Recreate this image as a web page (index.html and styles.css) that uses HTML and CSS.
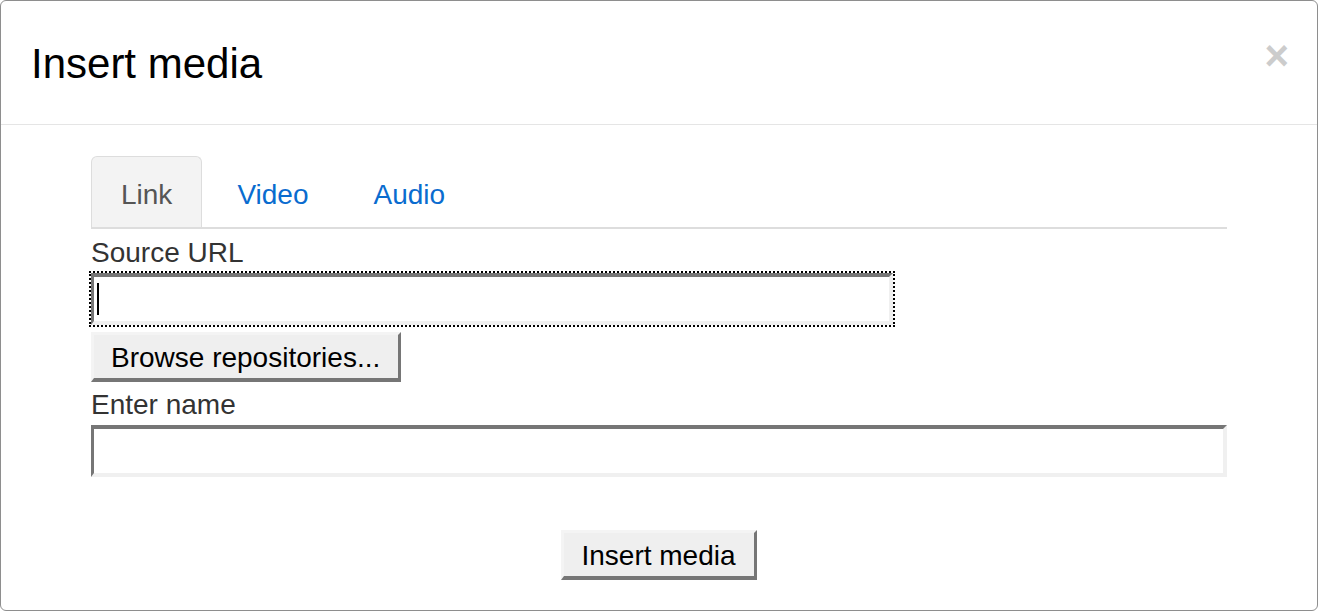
FILE: index.html
```html
<!DOCTYPE html>
<html lang="en">
<head>
<meta charset="utf-8">
<title>Insert media</title>
<link rel="stylesheet" href="styles.css">
</head>
<body>
<div class="modal">
  <header class="modal-header">
    <h3 class="modal-title">Insert media</h3>
    <span class="close" aria-label="Close">×</span>
  </header>
  <div class="modal-body">
    <ul class="tabs">
      <li class="tab active">Link</li>
      <li class="tab">Video</li>
      <li class="tab">Audio</li>
    </ul>
    <label class="field-label">Source URL</label>
    <div class="url-wrap">
      <input class="text-input url-input" type="text">
      <span class="caret"></span>
    </div>
    <button class="btn browse-btn" type="button">Browse repositories...</button>
    <label class="field-label name-label">Enter name</label>
    <input class="text-input name-input" type="text">
    <div class="modal-footer">
      <button class="btn" type="button">Insert media</button>
    </div>
  </div>
</div>
</body>
</html>
```

FILE: styles.css
```css
* { box-sizing: border-box; }

html, body {
  margin: 0;
  padding: 0;
  background: #ffffff;
}

body {
  font-family: "Liberation Sans", Arial, Helvetica, sans-serif;
  font-size: 28px;
  line-height: 40px;
  color: #333333;
}

.modal {
  height: 611px;
  width: 1318px;
  border: 1px solid #8e8e8e;
  border-radius: 6px;
  display: flex;
  flex-direction: column;
  background: #ffffff;
}

.modal-header {
  display: flex;
  justify-content: space-between;
  align-items: flex-start;
  padding: 40px 28px 37px 30px;
  border-bottom: 1px solid #e5e5e5;
}

.modal-title {
  margin: 0;
  font-size: 42px;
  line-height: 46px;
  font-weight: normal;
  color: #000000;
}

.close {
  font-size: 42px;
  line-height: 42px;
  font-weight: bold;
  color: #cccccc;
  margin-top: -6px;
}

.modal-body {
  padding: 31px 90px 0;
}

.tabs {
  list-style: none;
  margin: 0;
  padding: 0;
  display: flex;
  border-bottom: 2px solid #dddddd;
}

.tab {
  padding: 18px 29px 12px;
  margin-right: 5px;
  border: 1px solid transparent;
  border-bottom: 0;
  border-radius: 6px 6px 0 0;
  color: #0a6ccf;
}

.tab.active {
  background: #f3f3f3;
  border-color: #dddddd;
  color: #555555;
}

.field-label {
  display: block;
  margin-top: 4px;
  color: #333333;
}

.name-label {
  margin-top: 3px;
}

.url-wrap {
  position: relative;
  width: 802px;
}

.text-input {
  display: block;
  height: 52px;
  margin: 0;
  padding: 0 8px;
  font: inherit;
  background: #ffffff;
  border-style: solid;
  border-width: 4px 4px 4px 3px;
  border-color: #767676 #f0f0f0 #f0f0f0 #767676;
  border-radius: 0;
}

.url-input {
  width: 802px;
  outline: 2px dotted #000000;
  outline-offset: 0;
}

.caret {
  position: absolute;
  left: 6px;
  top: 10px;
  width: 2px;
  height: 32px;
  background: #000000;
}

.name-input {
  width: 100%;
}

.btn {
  display: inline-block;
  height: 50px;
  margin: 0;
  padding: 5px 18px 2px 17px;
  font: inherit;
  line-height: 36px;
  color: #000000;
  background: #efefef;
  border-style: solid;
  border-width: 3px 3px 4px 3px;
  border-color: #f4f4f4 #767676 #767676 #f4f4f4;
  border-radius: 0;
}

.browse-btn {
  display: block;
  margin-top: 7px;
}

.modal-footer {
  display: flex;
  justify-content: center;
  margin-top: 53px;
}
```
